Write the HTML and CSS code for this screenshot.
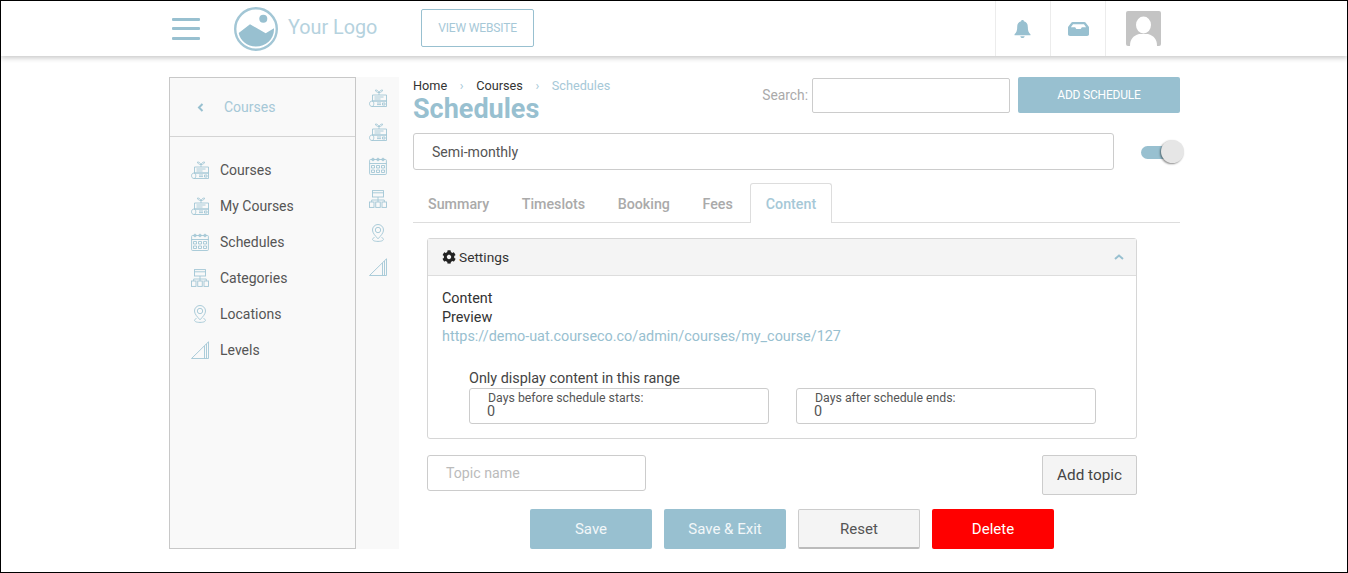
FILE: index.html
```html
<!DOCTYPE html>
<html lang="en">
<head>
<meta charset="utf-8">
<title>Schedules</title>
<link rel="stylesheet" href="styles.css">
</head>
<body>
<svg class="defs" width="0" height="0" aria-hidden="true">
  <symbol id="i-course" viewBox="0 0 18 18">
    <g fill="none" stroke="currentColor" stroke-width=".9">
      <path d="M10 6V3M10 3.500C9 1.500 8 1 6.500 1c0 1.600 1.500 2.500 3.500 2.500zM10 3.500c1-2 2-2.500 3.500-2.500 0 1.600-1.500 2.500-3.500 2.500z"/>
      <path d="M3.500 6h14v6h-14zM5.500 8h9M5.500 10h6"/>
      <path d="M3 12h14.500v5.500H3c-3.300 0-3.300-5.500 0-5.500zM3 12c2.400 0 2.400 5.500 0 5.500M8 14h4M8 15.600h4M13.500 14h2.500v2h-2.500z"/>
    </g>
  </symbol>
  <symbol id="i-cal" viewBox="0 0 18 18">
    <g fill="none" stroke="currentColor" stroke-width=".9">
      <rect x=".6" y="2.500" width="16.800" height="15" rx="1"/>
      <path d="M.6 6.500h16.800"/>
      <circle cx="4" cy="2.500" r="1.300"/><circle cx="9" cy="2.500" r="1.300"/><circle cx="14" cy="2.500" r="1.300"/>
      <path d="M2.500 8.500h3v2.500h-3zM7.500 8.500h3v2.500h-3zM12.500 8.500h3v2.500h-3zM2.500 13h3v2.500h-3zM7.500 13h3v2.500h-3zM12.500 13h3v2.500h-3z"/>
    </g>
  </symbol>
  <symbol id="i-cat" viewBox="0 0 18 18">
    <g fill="none" stroke="currentColor" stroke-width=".9">
      <rect x="3.500" y=".6" width="11" height="6.400"/>
      <path d="M3.500 2.800h11M9 7v3M2.700 12v-2h12.600v2M9 10v2"/>
      <rect x=".5" y="12" width="4.500" height="5.400"/>
      <rect x="6.750" y="12" width="4.500" height="5.400"/>
      <rect x="13" y="12" width="4.500" height="5.400"/>
    </g>
  </symbol>
  <symbol id="i-loc" viewBox="0 0 18 18">
    <g fill="none" stroke="currentColor" stroke-width=".9">
      <path d="M9 14.800C6 11.500 3.500 9 3.500 6a5.500 5.500 0 0 1 11 0c0 3-2.500 5.500-5.500 8.800z"/>
      <circle cx="9" cy="6" r="2.700"/>
      <path d="M5.500 13.500C2.500 14.500 2.500 17.400 9 17.400s6.500-2.900 3.500-3.900"/>
    </g>
  </symbol>
  <symbol id="i-lvl" viewBox="0 0 18 18">
    <g fill="none" stroke="currentColor" stroke-width=".9">
      <path d="M.5 17.500 17.500.8v16.700zM13.500 5v12.500M15.500 3v14.500"/>
    </g>
  </symbol>
</svg>

<div class="frame">
  <header class="topbar">
    <div class="topbar-left">
      <button class="burger" aria-label="Menu"><span></span><span></span><span></span></button>
      <div class="logo">
        <svg class="logo-mark" viewBox="0 0 44 44" width="44" height="44">
          <circle cx="22" cy="22" r="20.800" fill="none" stroke="#a2c6d5" stroke-width="2.400"/>
          <circle cx="29.300" cy="11.700" r="4" fill="#98c0d0"/>
          <path d="M4.700 26 16 17.300l15.700 9 8.300-5c.5 10.700-8 18.200-18 18.200-9 0-16-6-17.300-13.500z" fill="#98c0d0"/>
        </svg>
        <span class="logo-text">Your Logo</span>
      </div>
      <a class="view-site">VIEW WEBSITE</a>
    </div>
    <div class="topbar-right">
      <div class="top-cell">
        <svg class="bell" viewBox="1 0 16 17" width="17" height="18" preserveAspectRatio="none"><path fill="#98c0d0" d="M9 0c.8 0 1.300.5 1.300 1.200C12.800 1.800 14 3.800 14 6.500c0 3.500.8 5.300 2.500 7v1h-15v-1C3.200 11.800 4 10 4 6.500c0-2.700 1.200-4.700 3.700-5.300C7.700.5 8.200 0 9 0zM7 15.300h4c0 1-.9 1.700-2 1.700s-2-.7-2-1.700z"/></svg>
      </div>
      <div class="top-cell">
        <svg viewBox="0 0 22 16" width="21" height="14" preserveAspectRatio="none"><path fill="#98c0d0" d="M5 0h12c.8 0 1.400.4 1.800 1l3 4.500c.1.200.2.500.2.800V14c0 1.100-.9 2-2 2H2c-1.100 0-2-.9-2-2V6.300c0-.3.100-.6.200-.8L3.200 1C3.600.4 4.200 0 5 0zm.3 2.500L3 6h4.500l1.200 2h4.600l1.200-2H19l-2.300-3.500z"/></svg>
      </div>
      <div class="top-cell top-cell-avatar">
        <svg class="avatar" viewBox="0 0 35 35" width="35" height="35">
          <rect width="35" height="35" rx="2" fill="#c4c4c4"/>
          <ellipse cx="17.500" cy="14" rx="7.500" ry="8.500" fill="#fff"/>
          <path d="M4 35c0-7 3-10 9-12h9c6 2 9 5 9 12z" fill="#fff"/>
        </svg>
      </div>
    </div>
  </header>

  <div class="page">
    <aside class="sidebar">
      <div class="side-head">
        <svg class="chev" viewBox="0 0 7 9" width="7" height="9"><path d="M5.500 1 2 4.500 5.500 8" fill="none" stroke="#98c0d0" stroke-width="2"/></svg>
        <span>Courses</span>
      </div>
      <nav class="side-nav">
        <a class="side-item"><svg><use href="#i-course"/></svg><span>Courses</span></a>
        <a class="side-item"><svg><use href="#i-course"/></svg><span>My Courses</span></a>
        <a class="side-item"><svg><use href="#i-cal"/></svg><span>Schedules</span></a>
        <a class="side-item"><svg><use href="#i-cat"/></svg><span>Categories</span></a>
        <a class="side-item"><svg><use href="#i-loc"/></svg><span>Locations</span></a>
        <a class="side-item"><svg><use href="#i-lvl"/></svg><span>Levels</span></a>
      </nav>
    </aside>
    <div class="rail">
      <svg><use href="#i-course"/></svg>
      <svg><use href="#i-course"/></svg>
      <svg><use href="#i-cal"/></svg>
      <svg><use href="#i-cat"/></svg>
      <svg><use href="#i-loc"/></svg>
      <svg><use href="#i-lvl"/></svg>
    </div>

    <main class="main">
      <div class="title-row">
        <div class="title-block">
          <div class="crumbs"><a>Home</a><i>&#8250;</i><a>Courses</a><i>&#8250;</i><a class="crumb-on">Schedules</a></div>
          <h1>Schedules</h1>
        </div>
        <div class="search">
          <label>Search:</label>
          <div class="search-box"></div>
          <button class="btn-add">ADD SCHEDULE</button>
        </div>
      </div>

      <div class="name-row">
        <div class="name-box">Semi-monthly</div>
        <div class="toggle"><span class="knob"></span></div>
      </div>

      <div class="tabs">
        <a>Summary</a><a>Timeslots</a><a>Booking</a><a>Fees</a><a class="tab-on">Content</a>
      </div>

      <section class="panel">
        <div class="panel-head">
          <div class="panel-title">
            <svg viewBox="0 0 512 512" width="14" height="14"><path fill="#222" d="M487 315l-42-25c4-23 4-46 0-69l42-25c5-3 7-8 6-14-11-35-30-67-55-94-4-4-9-5-14-2l-42 24c-18-15-38-27-60-35V26c0-6-4-10-9-11-36-8-73-8-108 0-6 1-10 5-10 11v49c-22 8-42 20-60 35L93 86c-5-3-11-2-14 2-25 27-44 59-55 94-2 6 1 11 6 14l42 25c-4 23-4 46 0 69l-42 25c-5 3-8 8-6 14 11 35 30 67 55 94 4 4 9 5 14 2l42-24c18 15 38 27 60 35v49c0 6 4 10 10 11 36 8 73 8 108 0 5-1 9-5 9-11v-49c22-8 42-20 60-35l42 24c5 3 11 2 14-2 25-27 44-59 55-94 1-6-1-11-6-14zM256 336c-44 0-80-36-80-80s36-80 80-80 80 36 80 80-36 80-80 80z"/></svg>
            <span>Settings</span>
          </div>
          <svg class="panel-caret" viewBox="0 0 10 6" width="10" height="6"><path d="M1 5l4-3.500L9 5" fill="none" stroke="#98c0d0" stroke-width="2"/></svg>
        </div>
        <div class="panel-body">
          <div class="line">Content</div>
          <div class="line">Preview</div>
          <a class="line link">https://demo-uat.courseco.co/admin/courses/my_course/127</a>
          <div class="range">
            <div class="range-label">Only display content in this range</div>
            <div class="range-fields">
              <div class="field"><div class="field-label">Days before schedule starts:</div><div class="field-val">0</div></div>
              <div class="field"><div class="field-label">Days after schedule ends:</div><div class="field-val">0</div></div>
            </div>
          </div>
        </div>
      </section>

      <div class="topic-row">
        <div class="topic-input">Topic name</div>
        <button class="btn-topic">Add topic</button>
      </div>

      <div class="actions">
        <button class="btn btn-blue">Save</button>
        <button class="btn btn-blue">Save &amp; Exit</button>
        <button class="btn btn-grey">Reset</button>
        <button class="btn btn-red">Delete</button>
      </div>
    </main>
  </div>
</div>
</body>
</html>
```
FILE: styles.css
```css
* { box-sizing: border-box; }
html, body { margin: 0; padding: 0; height: 100%; }
body { font-family: Roboto, "Liberation Sans", sans-serif; color: #333; background: #fff; overflow: hidden; }
.defs { position: absolute; }
button { font-family: inherit; cursor: pointer; }

.frame { width: 1348px; height: 573px; border: 1px solid #000; background: #fff; overflow: hidden; }

.topbar { height: 55px; display: flex; justify-content: space-between; padding: 0 187px 0 170px; box-shadow: 0 2px 5px rgba(0,0,0,.22); background: #fff; }
.topbar-left { display: flex; align-items: center; }
.burger { width: 30px; height: 22px; padding: 0; border: 0; background: none; display: flex; flex-direction: column; justify-content: space-between; margin-right: 33px; }
.burger span { display: block; height: 3px; width: 28px; margin-left: 1px; background: #98c0d0; border-radius: 1px; }
.logo { display: flex; align-items: center; width: 187px; }
.logo-mark { margin-right: 10px; }
.logo-text { font-size: 19.800px; color: #b5d2de; margin-top: -2px; }
.view-site { width: 113px; height: 38px; margin-top: -2px; border: 1px solid #98c0d0; border-radius: 2px; display: flex; align-items: center; justify-content: center; font-size: 12px; letter-spacing: -.15px; color: #a6c8d7; }
.topbar-right { display: flex; }
.top-cell { width: 55px; display: flex; align-items: center; justify-content: center; border-left: 1px solid #ececec; }
.top-cell-avatar { justify-content: flex-end; }
.bell { margin-right: 2px; }
.avatar { display: block; margin-top: -1px; margin-right: -1px; }

.page { display: flex; padding: 21px 0 0 168px; }
.sidebar { width: 187px; height: 472px; background: #f9f9f9; border: 1px solid #c8c8c8; }
.side-head { height: 59px; display: flex; align-items: center; border-bottom: 1px solid #d4d4d4; padding-left: 27px; color: #a6c8d7; font-size: 14px; }
.chev { margin-right: 20px; }
.side-nav { padding-top: 15px; display: flex; flex-direction: column; }
.side-item { height: 36px; display: flex; align-items: center; padding-left: 21px; font-size: 14px; color: #555; }
.side-item svg { width: 18px; height: 18px; margin-right: 11px; color: #a2c6d5; }
.rail { width: 43px; height: 472px; background: #f9f9f9; display: flex; flex-direction: column; align-items: center; padding-top: 12px; gap: 15.800px; color: #a2c6d5; }
.rail svg { width: 18px; height: 18px; margin-left: 1px; flex: none; }

.main { width: 767px; margin-left: 14px; }
.title-row { display: flex; justify-content: space-between; align-items: flex-start; height: 56px; }
.crumbs { display: flex; font-size: 12.700px; line-height: 16px; margin-top: 1px; height: 16px; }
.crumbs a { color: #333; }
.crumbs i { font-style: normal; color: #a6c8d7; width: 29px; text-align: center; }
.crumbs .crumb-on { color: #a6c8d7; }
h1 { margin: 0; font-size: 27px; line-height: 30px; font-weight: 700; color: #98c0d0; }
.search { display: flex; align-items: center; }
.search label { font-size: 13.800px; color: #aaa; margin-right: 4px; }
.search-box { width: 198px; height: 35px; border: 1px solid #ccc; border-radius: 2px; margin: 1px 8px 0 0; }
.btn-add { width: 162px; height: 36px; border: 0; border-radius: 2px; background: #98c0d0; color: #fff; font-size: 12px; letter-spacing: -.2px; }

.name-row { display: flex; align-items: center; }
.name-box { width: 701px; height: 37px; border: 1px solid #ccc; border-radius: 3px; padding-left: 18px; display: flex; align-items: center; font-size: 14.100px; color: #555; }
.toggle { position: relative; width: 30px; height: 13px; border-radius: 7px; background: #98c0d0; margin: 1px 0 0 27px; }
.knob { position: absolute; right: -13px; top: -6px; width: 23px; height: 23px; border-radius: 50%; background: #e6e6e6; box-shadow: -1px 1px 2px rgba(0,0,0,.45); }

.tabs { display: flex; height: 40px; margin-top: 13px; border-bottom: 1px solid #ddd; font-size: 14.250px; font-weight: 500; color: #aaa; }
.tabs a { padding: 0 15px; margin-right: .5px; line-height: 40px; border: 1px solid transparent; border-bottom: 0; border-radius: 3px 3px 0 0; }
.tabs a:first-child { padding-left: 14px; }
.tabs .tab-on { color: #a6c8d7; background: #fff; border-color: #ddd; height: 40px; margin-left: .5px; }

.panel { width: 710px; height: 201px; margin: 15px 0 0 14px; border: 1px solid #d6d6d6; border-radius: 3px; }
.panel-head { height: 37px; background: #f4f4f4; border-bottom: 1px solid #ddd; display: flex; align-items: center; justify-content: space-between; padding: 0 12px 0 14px; font-size: 13.700px; }
.panel-title { display: flex; align-items: center; gap: 3px; }
.panel-body { padding: 13px 14px 0; font-size: 14.400px; line-height: 19px; }
.line { display: block; }
.link { color: #98c0d0; }
.range { margin: 24px 0 0 27px; }
.range-label { line-height: 18px; color: #444; }
.range-fields { display: flex; gap: 27px; }
.field { width: 300px; height: 36px; border: 1px solid #ccc; border-radius: 3px; padding: 2px 18px; }
.field-label { font-size: 12.300px; line-height: 14px; color: #555; }
.field-val { font-size: 14.400px; line-height: 14px; color: #555; margin-left: -1px; }

.topic-row { display: flex; justify-content: space-between; align-items: flex-start; width: 710px; margin: 16px 0 0 14px; }
.topic-input { width: 219px; height: 36px; border: 1px solid #ccc; border-radius: 3px; padding-left: 18px; display: flex; align-items: center; font-size: 14.200px; color: #bbb; }
.btn-topic { width: 95px; height: 40px; background: #f4f4f4; border: 1px solid #ccc; border-radius: 2px; color: #444; font-size: 15.300px; }

.actions { display: flex; gap: 12px; margin: 14px 0 0 117px; }
.btn { width: 122px; height: 40px; border: 0; border-radius: 2px; font-size: 15px; }
.btn-blue { background: #98c0d0; color: #f2f7f9; }
.btn-grey { background: #f4f4f4; border: 1px solid #ccc; border-bottom: 2px solid #bbb; color: #555; }
.btn-red { background: #f00; color: #fff; }
```
